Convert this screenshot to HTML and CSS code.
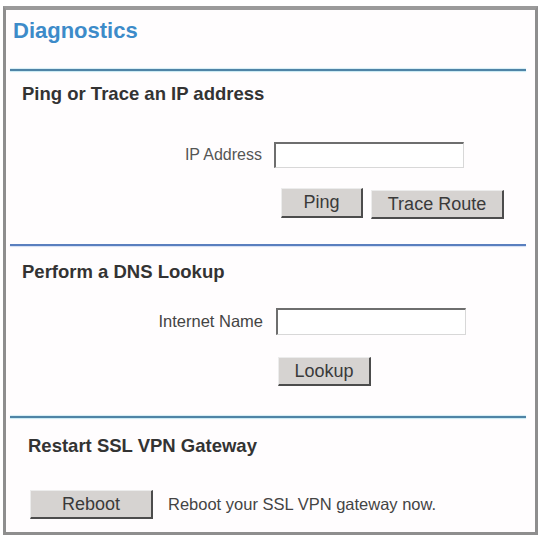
FILE: index.html
```html
<!DOCTYPE html>
<html>
<head>
<meta charset="utf-8">
<title>Diagnostics</title>
<link rel="stylesheet" href="styles.css">
</head>
<body>
<div class="frame">
  <h1 class="title">Diagnostics</h1>
  <div class="rule rule-first"></div>

  <h2 class="heading">Ping or Trace an IP address</h2>
  <div class="field-row row-ip">
    <label class="field-label" for="ip">IP Address</label>
    <input class="text-input" id="ip" type="text">
  </div>
  <div class="button-row row-ping">
    <button class="btn btn-ping">Ping</button>
    <button class="btn btn-trace">Trace Route</button>
  </div>
  <div class="rule rule-second"></div>

  <h2 class="heading heading-dns">Perform a DNS Lookup</h2>
  <div class="field-row row-name">
    <label class="field-label label-name" for="name">Internet Name</label>
    <input class="text-input input-name" id="name" type="text">
  </div>
  <div class="button-row row-lookup">
    <button class="btn btn-lookup">Lookup</button>
  </div>
  <div class="rule rule-third"></div>

  <h2 class="heading heading-restart">Restart SSL VPN Gateway</h2>
  <div class="reboot-row">
    <button class="btn btn-reboot">Reboot</button>
    <span class="reboot-text">Reboot your SSL VPN gateway now.</span>
  </div>
</div>
</body>
</html>
```

FILE: styles.css
```css
* { box-sizing: border-box; }

html, body {
  margin: 0;
  padding: 0;
  background: #ffffff;
}

body {
  font-family: "Liberation Sans", Arial, sans-serif;
  color: #333;
}

.frame {
  margin: 6px 4px 0 3px;
  width: 535px;
  height: 529px;
  border: 3px solid #8e8e8e;
  border-top: 4px solid #9a9a9a;
  background: #fffdfe;
  padding: 0;
  display: flex;
  flex-direction: column;
}

.title {
  margin: 0;
  padding: 8px 0 0 7px;
  font-size: 22px;
  line-height: 26px;
  font-weight: bold;
  color: #3d8bc9;
}

.rule {
  height: 2px;
  margin: 0 9px 0 4px;
  background: #4f84a6;
  box-shadow: 0 1px 1px #c7e9f3, 0 -1px 1px #d6eef6;
  flex: none;
}
.rule-first { margin-top: 25px; }
.rule-second { margin-top: 25px; background: #5a7fbf; box-shadow: 0 1px 1px #d3def3; }
.rule-third { margin-top: 30px; }

.heading {
  margin: 11px 0 0 0;
  padding-left: 16px;
  font-size: 18.5px;
  line-height: 24px;
  font-weight: bold;
  color: #333;
}
.heading-dns { margin-top: 14px; }
.heading-restart { margin-top: 16px; padding-left: 22px; }

.field-row {
  display: flex;
  align-items: center;
  height: 26px;
}
.row-ip { margin-top: 36px; }
.row-name { margin-top: 24px; height: 27px; }

.field-label {
  width: 256px;
  margin-right: 12px;
  text-align: right;
  font-size: 16px;
  color: #555;
}
.label-name {
  width: 257px;
  margin-right: 13px;
  color: #444;
  font-size: 16.5px;
}

.text-input {
  width: 190px;
  height: 26px;
  border-style: solid;
  border-width: 2px 1px 1px 2px;
  border-color: #6e6e6e #d8d8d8 #d8d8d8 #6e6e6e;
  background: #fff;
  padding: 0 3px;
  font: 16px "Liberation Sans", Arial, sans-serif;
}
.input-name { height: 27px; }

.button-row {
  display: flex;
  gap: 8px;
}
.row-ping { margin-top: 20px; padding-left: 275px; }
.row-lookup { margin-top: 22px; padding-left: 272px; }

.btn {
  height: 30px;
  padding: 0;
  background: #d6d3d1;
  color: #3a3a3a;
  font: 18px "Liberation Sans", Arial, sans-serif;
  border-style: solid;
  border-width: 1px 2px 2px 1px;
  border-color: #ececec #4c4c4c #4c4c4c #ececec;
  border-radius: 0;
}
.btn-ping { width: 82px; }
.btn-trace { width: 133px; height: 29px; margin-top: 2px; }
.btn-lookup { width: 93px; height: 29px; }

.reboot-row {
  margin-top: 32px;
  padding-left: 24px;
  display: flex;
  align-items: center;
  gap: 15px;
}
.btn-reboot { width: 123px; height: 29px; }

.reboot-text {
  font-size: 16.5px;
  color: #444;
}
```
